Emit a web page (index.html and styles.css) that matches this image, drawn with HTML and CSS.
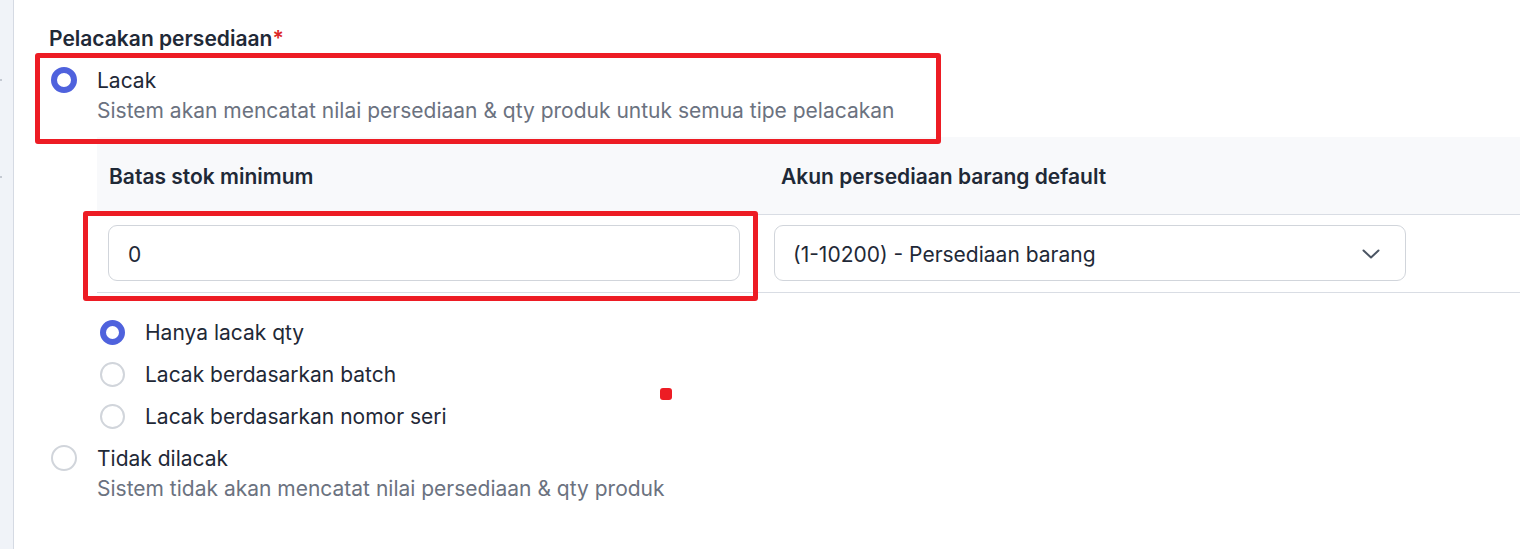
FILE: index.html
```html
<!DOCTYPE html>
<html lang="id">
<head>
  <meta charset="UTF-8" />
  <meta name="viewport" content="width=device-width, initial-scale=1.0"/>
  <title>Pelacakan persediaan</title>
  <link rel="stylesheet" href="styles.css">
</head>
<body>
  <div class="page">
    <aside class="rail">
      <span class="tick tick-1"></span>
      <span class="tick tick-2"></span>
    </aside>

    <main class="content">
      <div class="field-label">Pelacakan persediaan<span class="req">*</span></div>

      <!-- Lacak -->
      <label class="option">
        <span class="radio checked"></span>
        <span class="option-body">
          <span class="option-title">Lacak</span>
          <span class="option-desc">Sistem akan mencatat nilai persediaan &amp; qty produk untuk semua tipe pelacakan</span>
        </span>
      </label>

      <div class="stock-panel">
        <div class="panel-head">
          <div class="head-cell first">Batas stok minimum</div>
          <div class="head-cell second">Akun persediaan barang default</div>
          <div class="head-cell"></div>
        </div>
        <div class="panel-row">
          <div class="row-cell">
            <div class="text-input">0</div>
          </div>
          <div class="row-cell">
            <div class="select-input">
              <span>(1-10200) - Persediaan barang</span>
              <svg class="chevron" width="18" height="10" viewBox="0 0 18 10">
                <polyline points="1.5,1.5 9,8.5 16.5,1.5" fill="none" stroke="#4b5563" stroke-width="2" stroke-linecap="round" stroke-linejoin="round"/>
              </svg>
            </div>
          </div>
          <div class="row-cell"></div>
        </div>
      </div>

      <ul class="sub-options">
        <li class="sub-option"><span class="radio small checked"></span>Hanya lacak qty</li>
        <li class="sub-option"><span class="radio small"></span>Lacak berdasarkan batch</li>
        <li class="sub-option"><span class="radio small"></span>Lacak berdasarkan nomor seri</li>
      </ul>

      <!-- Tidak dilacak -->
      <label class="option last">
        <span class="radio"></span>
        <span class="option-body">
          <span class="option-title">Tidak dilacak</span>
          <span class="option-desc">Sistem tidak akan mencatat nilai persediaan &amp; qty produk</span>
        </span>
      </label>
    </main>

    <!-- annotation marks -->
    <div class="mark mark-option"></div>
    <div class="mark mark-input"></div>
    <div class="mark-dot"></div>
  </div>
</body>
</html>
```

FILE: styles.css
```css
* {
  box-sizing: border-box;
}
body {
  margin: 0;
  font-family: Inter, "Noto Sans", Arial, sans-serif;
  color: #1f2937;
  background-color: #fff;
}
.page {
  position: relative;
  display: flex;
  min-height: 549px;
  overflow: hidden;
}
.rail {
  position: relative;
  width: 14px;
  flex-shrink: 0;
  background-color: #f0f3f8;
  border-right: 1px solid #d5dae3;
}
.tick {
  position: absolute;
  left: 0;
  width: 2px;
  height: 2px;
  background-color: #c4c9d2;
}
.tick-1 { top: 79px; }
.tick-2 { top: 176px; }

.content {
  flex: 1;
  padding: 27px 0 0 35px;
}
.field-label {
  font-size: 21px;
  font-weight: 600;
  line-height: 24px;
  color: #1f2937;
}
.req {
  color: #dc2626;
}

.option {
  display: flex;
  align-items: flex-start;
  gap: 20px;
  margin-top: 15px;
  padding-left: 2px;
}
.option.last {
  margin-top: 7px;
}
.option-body {
  display: flex;
  flex-direction: column;
  font-size: 21px;
  line-height: 30px;
}
.option-title {
  color: #1f2937;
}
.option-desc {
  color: #6b7280;
}

.radio {
  display: inline-block;
  flex-shrink: 0;
  width: 26px;
  height: 26px;
  margin-top: 1px;
  border-radius: 50%;
  border: 2px solid #d1d5db;
  background-color: #fff;
}
.radio.checked {
  border: 6px solid #4f62dd;
}
.radio.small {
  width: 25px;
  height: 25px;
  margin-top: 0;
}
.radio.small.checked {
  border-width: 6px;
}

.stock-panel {
  margin: 11px 0 0 48px;
}
.panel-head,
.panel-row {
  display: grid;
  grid-template-columns: 666px 666px 1fr;
  border-bottom: 1px solid #d9dde4;
}
.panel-head {
  height: 78px;
  padding-top: 2px;
  background-color: #f8f9fb;
  align-items: center;
}
.head-cell {
  font-size: 21px;
  font-weight: 600;
  color: #1f2937;
}
.head-cell.first {
  padding-left: 12px;
}
.head-cell.second {
  padding-left: 18px;
}
.panel-row {
  padding: 10px 0 11px;
}
.row-cell {
  padding-left: 11px;
}
.text-input,
.select-input {
  width: 632px;
  height: 56px;
  display: flex;
  align-items: center;
  padding: 2px 19px 0;
  border: 1px solid #d1d5db;
  border-radius: 9px;
  font-size: 21px;
  color: #1f2937;
  background-color: #fff;
}
.select-input {
  justify-content: space-between;
  padding: 2px 25px 0 18px;
}

.sub-options {
  list-style: none;
  margin: 18px 0 0 51px;
  padding: 0;
}
.sub-option {
  display: flex;
  align-items: center;
  gap: 20px;
  height: 42px;
  font-size: 21px;
  color: #1f2937;
}

.mark {
  position: absolute;
  border: 5px solid #ed1c24;
  border-radius: 3px;
}
.mark-option {
  left: 35px;
  top: 53px;
  width: 906px;
  height: 91px;
}
.mark-input {
  left: 83px;
  top: 211px;
  width: 675px;
  height: 90px;
}
.mark-dot {
  position: absolute;
  left: 660px;
  top: 388px;
  width: 12px;
  height: 12px;
  border-radius: 3px;
  background-color: #ed1c24;
}
```
